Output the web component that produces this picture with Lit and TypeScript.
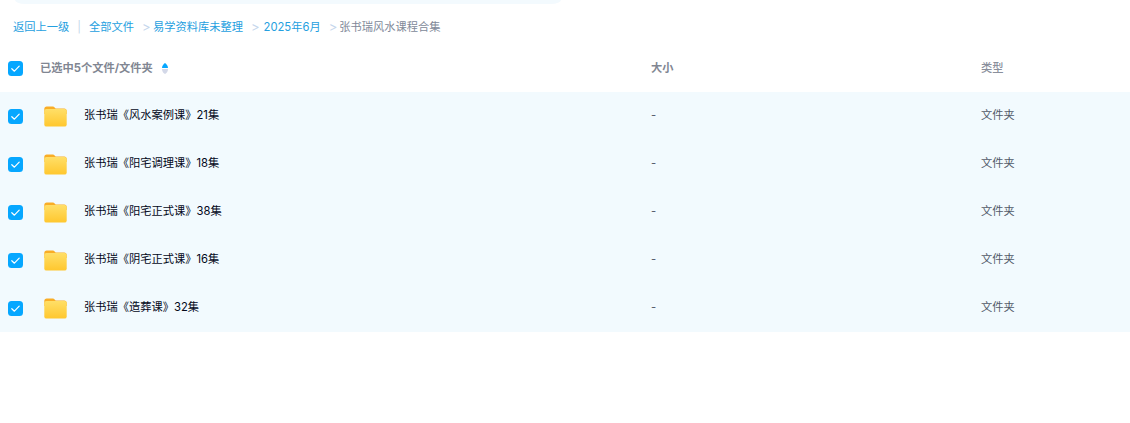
import { LitElement, html, css } from "lit";
import { customElement } from "lit/decorators.js";

const rows = [
  "张书瑞《风水案例课》21集",
  "张书瑞《阳宅调理课》18集",
  "张书瑞《阳宅正式课》38集",
  "张书瑞《阴宅正式课》16集",
  "张书瑞《造葬课》32集",
];

const check = html`<span class="check"><svg width="15" height="15" viewBox="0 0 15 15"><path d="M3.8 7.7l2.6 2.5 4.8-5" fill="none" stroke="#fff" stroke-width="1.2" stroke-linecap="round" stroke-linejoin="round"/></svg></span>`;

const folder = html`<svg class="folder" width="23" height="21" viewBox="0 0 23 21">
  <defs><linearGradient id="fg" x1="0" y1="0" x2="0" y2="1"><stop offset="0" stop-color="#ffdf68"/><stop offset="1" stop-color="#ffc72e"/></linearGradient></defs>
  <path d="M0.3 3C0.3 1.4 1.2 0.4 2.8 0.4h5.6c1 0 1.6.3 2.2 1l1 1.1h8.6c1.5 0 2.5 1 2.5 2.5v3H0.3z" fill="#f9ad26"/>
  <rect x="0.3" y="2.9" width="22.4" height="17.7" rx="2.2" fill="url(#fg)"/>
</svg>`;

@customElement("app-root")
export class AppRoot extends LitElement {
  static styles = css`
    :host {
      display: block;
      width: 1130px;
      height: 423px;
      background: #fff;
      overflow: hidden;
      font-family: Inter, "Noto Sans CJK SC", sans-serif;
      font-size: 11.25px;
      line-height: 16px;
      color: #03081a;
    }
    .pill {
      height: 4px;
      margin: 0 569px 0 15px;
      background: #f3fafe;
      border-radius: 0 0 10px 10px / 0 0 4px 4px;
    }
    .crumbs {
      display: flex;
      align-items: center;
      box-sizing: border-box;
      height: 40px;
      padding: 6px 0 0 13px;
      color: #25a0e0;
      white-space: nowrap;
    }
    .bar {
      color: #c4d7ea;
      margin: 0 8px;
    }
    .sep {
      display: inline-block;
      width: 7px;
      margin: 0 4px 0 8px;
      text-align: center;
      font-size: 13px;
      color: #c5d6ec;
    }
    .sep.wide {
      margin-right: 5.5px;
    }
    .sep.narrow {
      margin-right: 3.5px;
    }
    .current {
      color: #818999;
    }
    .row {
      display: grid;
      grid-template-columns: 40px 611px 330px 1fr;
      align-items: center;
      height: 48px;
    }
    .head {
      color: #818692;
      font-weight: 700;
    }
    .light {
      color: #8a8f9c;
      font-weight: 500;
    }
    .body {
      background: #f2fafe;
    }
    .body .text {
      margin-bottom: 2px;
    }
    .check {
      display: block;
      width: 15px;
      height: 15px;
      margin-left: 8px;
      border-radius: 3.5px;
      background: #06a7ff;
    }
    .check svg {
      display: block;
    }
    .title {
      display: flex;
      align-items: center;
    }
    .sort {
      display: block;
      margin-left: 9px;
    }
    .folder {
      display: block;
      margin: 0 17.5px 0 3.5px;
      flex: none;
    }
    .muted {
      color: #525a6a;
    }
  `;

  render() {
    return html`
      <div class="pill"></div>
      <div class="crumbs">
        <span>返回上一级</span><span class="bar">|</span><span>全部文件</span>
        <span class="sep">&gt;</span><span>易学资料库未整理</span>
        <span class="sep wide">&gt;</span><span>2025年6月</span>
        <span class="sep narrow">&gt;</span><span class="current">张书瑞风水课程合集</span>
      </div>
      <div class="row head">
        ${check}
        <div class="title">
          <span>已选中5个文件/文件夹</span>
          <svg class="sort" width="6" height="11" viewBox="0 0 6 11">
            <path d="M3 0C4.2 1 6 2.6 6 5H0C0 2.6 1.8 1 3 0z" fill="#06a7ff"/>
            <path d="M0 6H6C6 8.5 4.5 10.5 3 11 1.5 10.5 0 8.5 0 6z" fill="#d3d8e8"/>
          </svg>
        </div>
        <span>大小</span>
        <span class="light">类型</span>
      </div>
      ${rows.map(
        (name) => html`<div class="row body">
          ${check}
          <div class="title">${folder}<span class="text">${name}</span></div>
          <span class="muted text">-</span>
          <span class="muted text">文件夹</span>
        </div>`
      )}
    `;
  }
}
